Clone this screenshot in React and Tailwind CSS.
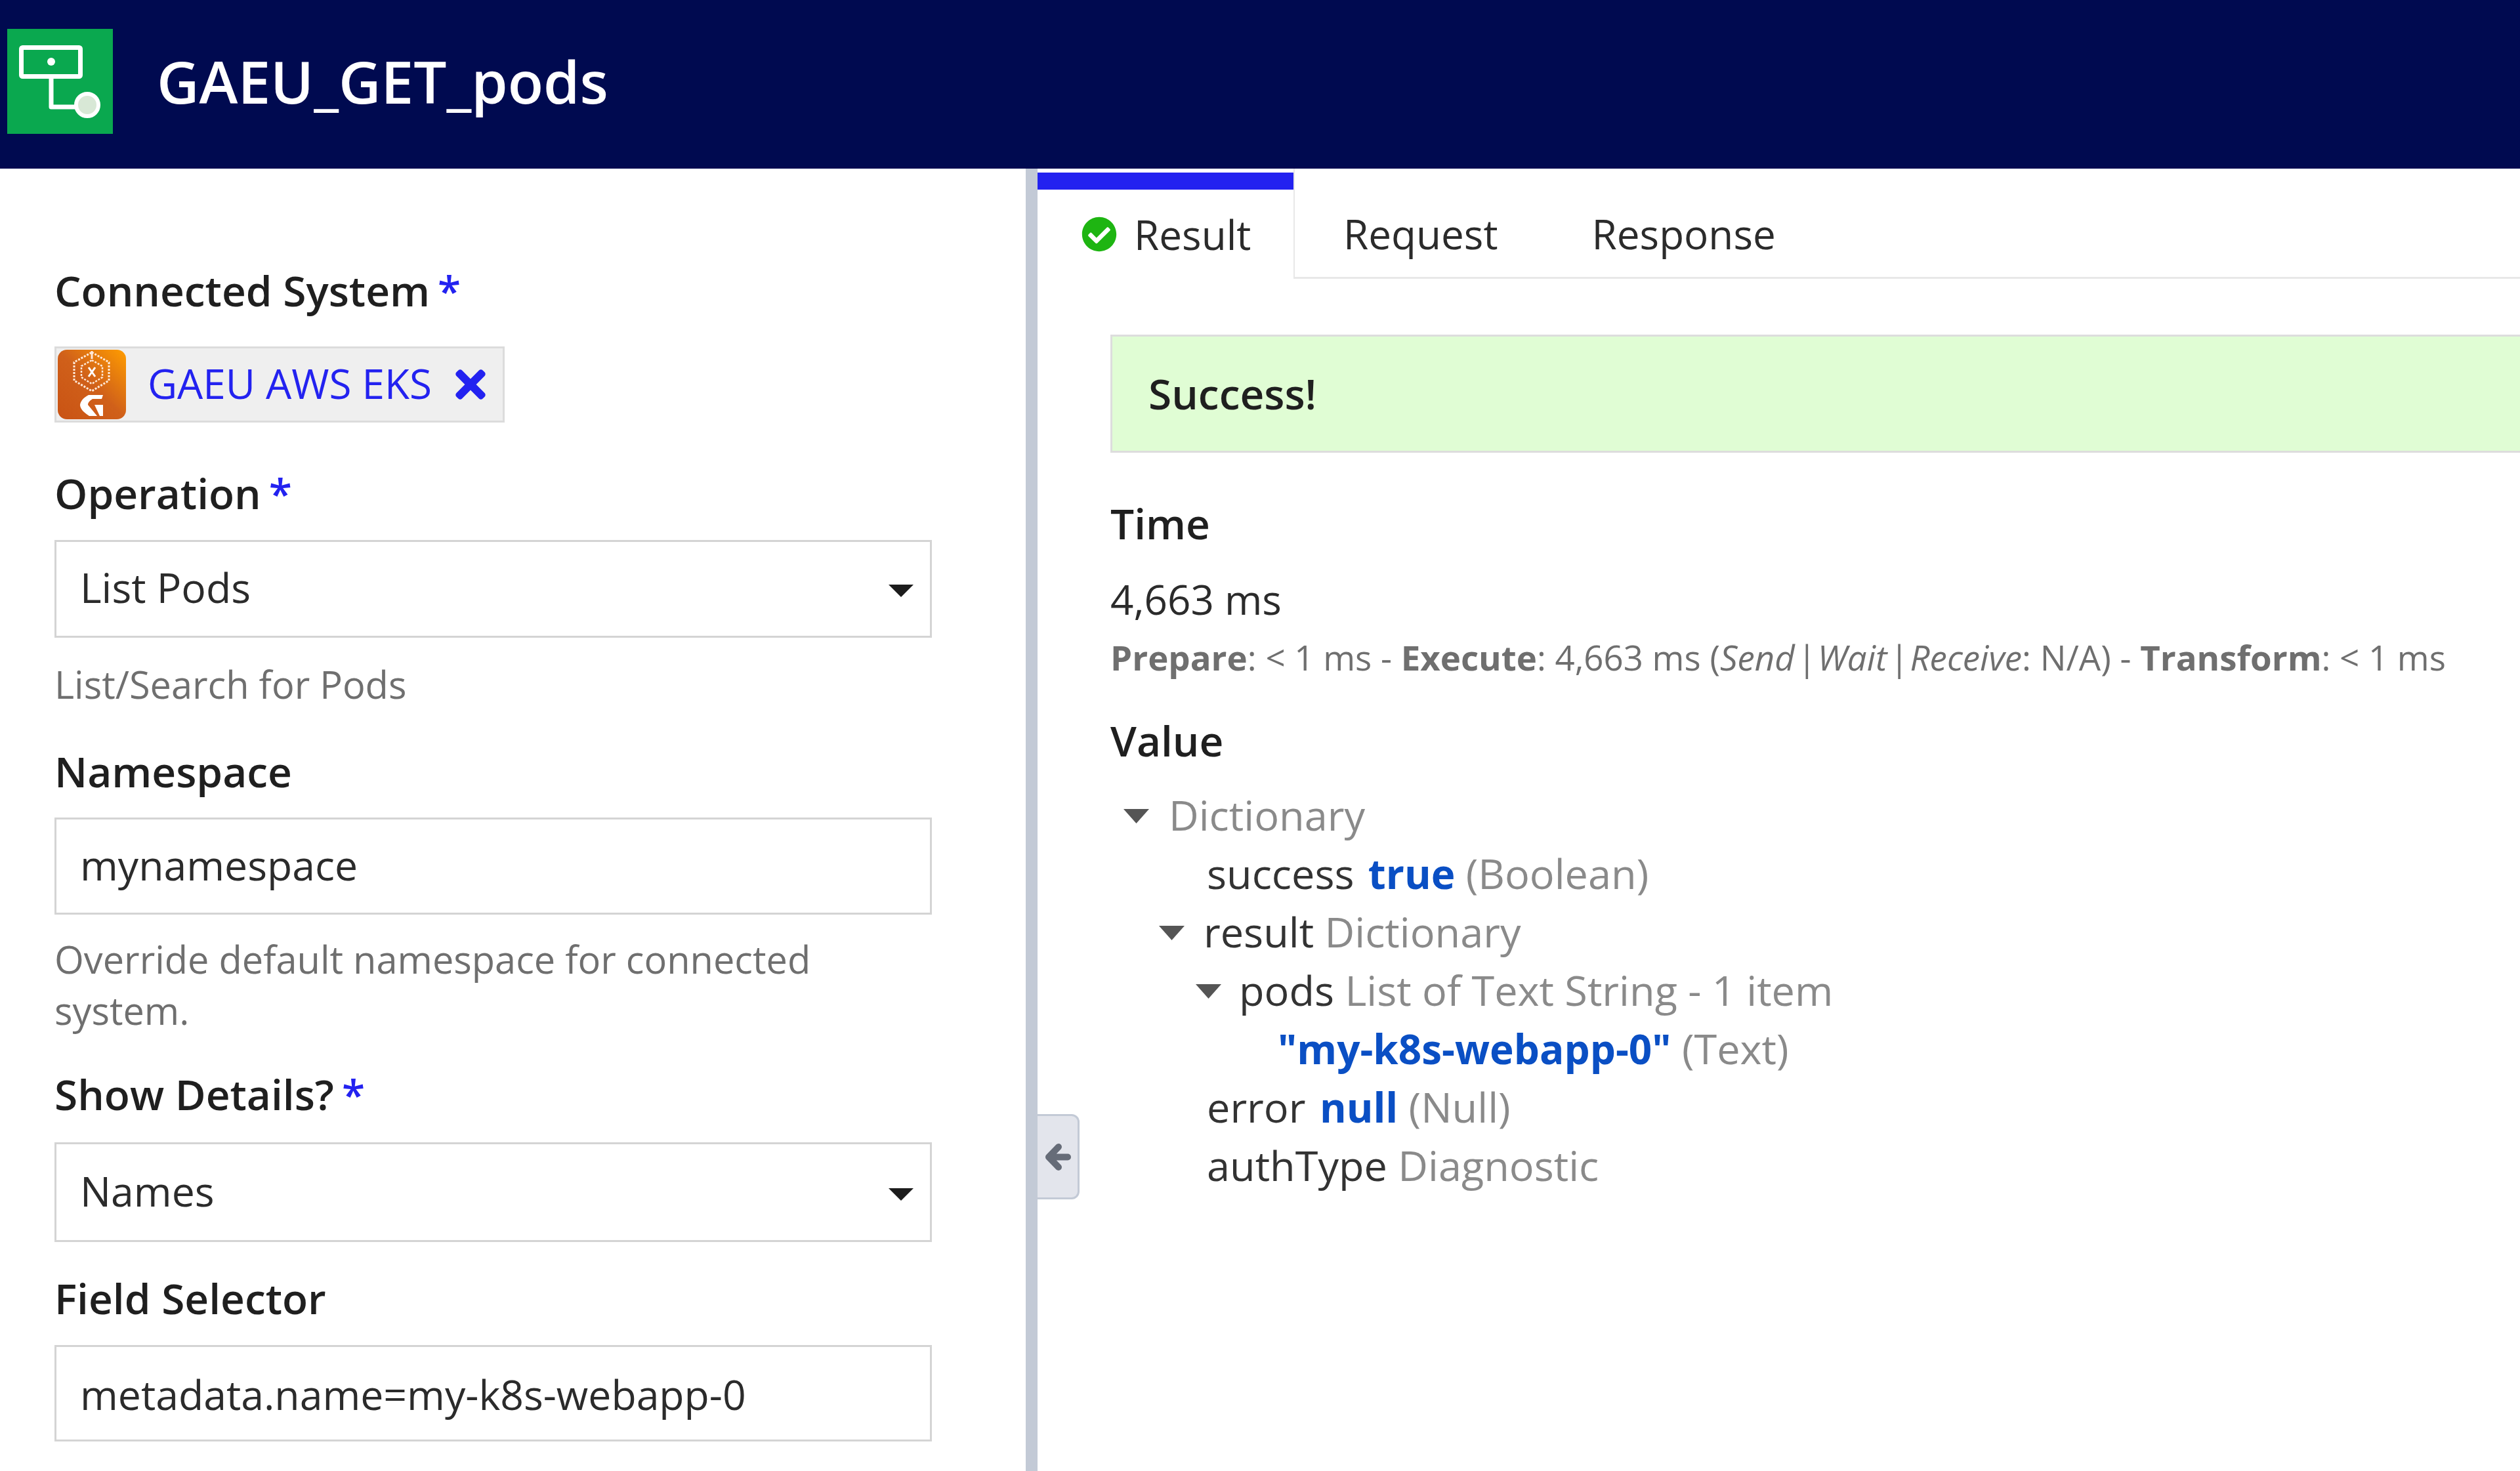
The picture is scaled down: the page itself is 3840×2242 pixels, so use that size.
import React from "react";
import { FaCheckCircle, FaTimes } from "react-icons/fa";

const Label = ({ children, required, className = "" }) => (
  <div className={`h-[88px] text-[64px] leading-[88px] font-semibold text-[#1f1f1f] ${className}`}>
    {children}
    {required && <span className="ml-[12px] font-semibold text-[#2322f0]">*</span>}
  </div>
);

const Help = ({ children, className = "" }) => (
  <div className={`w-[1337px] text-[57.7px] leading-[78px] text-[#6f6f6f] ${className}`}>{children}</div>
);

const Field = ({ children, select, className = "" }) => (
  <div className={`flex w-[1337px] items-center justify-between border-[3px] border-[#d4d4d4] bg-white pl-[36px] pr-[25px] text-[62.5px] text-[#2b2b2b] ${className}`}>
    <span className="pb-[5px]">{children}</span>
    {select && (
      <svg width="38" height="19" viewBox="0 0 38 19" className="mt-[6px]">
        <polygon points="0,0 38,0 19,19" fill="#1c1c1c" />
      </svg>
    )}
  </div>
);

const Caret = () => (
  <svg width="39" height="22" viewBox="0 0 39 22" className="mt-[3px] shrink-0">
    <polygon points="0,0 39,0 19.5,22" fill="#555555" />
  </svg>
);

const Gray = ({ children }) => <span className="text-[#8a8a8a]">{children}</span>;
const Val = ({ children }) => <span className="ml-[5px] text-[62px] font-bold text-[#0a4fc4]">{children}</span>;

const TreeRow = ({ children, className = "" }) => (
  <div className={`flex h-[89px] items-center whitespace-pre text-[63px] text-[#333333] ${className}`}>{children}</div>
);

const AppIcon = () => (
  <svg width="161" height="160" viewBox="0 0 161 160" className="shrink-0">
    <rect width="161" height="160" fill="#0aa84f" />
    <rect x="21.5" y="28.5" width="90" height="44" rx="2" fill="none" stroke="#ffffff" strokeWidth="7" />
    <circle cx="67" cy="50" r="6" fill="#ffffff" />
    <path d="M67 73V119H105" fill="none" stroke="#ffffff" strokeWidth="7" strokeLinejoin="round" />
    <circle cx="122" cy="116" r="17" fill="#d8e8d6" stroke="#ffffff" strokeWidth="6" />
  </svg>
);

const EksIcon = () => (
  <svg width="104" height="106" viewBox="0 0 104 106" className="shrink-0">
    <defs>
      <linearGradient id="eks" x1="1" y1="0" x2="0" y2="1">
        <stop offset="0" stopColor="#ff9d00" />
        <stop offset="0.5" stopColor="#d0601a" />
        <stop offset="1" stopColor="#c95314" />
      </linearGradient>
    </defs>
    <rect width="104" height="106" rx="14" fill="url(#eks)" />
    <polygon points="52,4 78,19 78,47 52,63 25,47 25,19" fill="none" stroke="#ffe9d8" strokeWidth="3" strokeDasharray="3 2" />
    <polygon points="52,16 68,25 68,42 52,52 36,42 36,25" fill="none" stroke="#ffe9d8" strokeWidth="2.5" strokeDasharray="3 2" />
    <path d="M47 27L57 41M57 27L47 41" stroke="#ffffff" strokeWidth="3" />
    <path d="M52 2V14" stroke="#ffe9d8" strokeWidth="3" />
    <path d="M47 69H69L67 75H53C48 78 46 81 46 84L60 101H48C40 96 34 90 34 84C35 77 41 72 47 69Z" fill="#ffffff" />
    <polygon points="56,84 69,84 69,101 64,101" fill="#ffffff" />
  </svg>
);

const BackArrow = () => (
  <svg width="40" height="43" viewBox="0 0 40 43">
    <path d="M21 6L6 21.5L21 37M8 21.5H35" fill="none" stroke="#666c78" strokeWidth="10" strokeLinecap="round" strokeLinejoin="round" />
  </svg>
);

export default function App() {
  return (
    <div className="flex h-[2242px] w-[3840px] flex-col overflow-hidden bg-white font-['Open_Sans',sans-serif]">
      <header className="flex h-[257px] shrink-0 items-center bg-[#000a50] pb-[9px] pl-[11px]">
        <AppIcon />
        <h1 className="ml-[67px] text-[89px] font-semibold text-white">GAEU_GET_pods</h1>
      </header>

      <div className="flex flex-1 overflow-hidden">
        <div className="w-[1563px] shrink-0 pl-[83px] pt-[142px]">
          <Label required>Connected System</Label>
          <div className="mt-[41px] flex h-[116px] w-[686px] items-center border-[3px] border-[#dcdcdc] bg-[#efefef] pl-[2px]">
            <EksIcon />
            <span className="ml-[33px] pb-[3px] text-[62px] text-[#2322f0]">GAEU AWS EKS</span>
            <FaTimes className="ml-[26px] text-[#2322f0]" size={66} />
          </div>

          <Label required className="mt-[64px]">Operation</Label>
          <Field select className="mt-[27px] h-[149px]">List Pods</Field>
          <Help className="mt-[32px]">List/Search for Pods</Help>

          <Label className="mt-[50px]">Namespace</Label>
          <Field className="mt-[26px] h-[148px]">mynamespace</Field>
          <Help className="mt-[29px]">Override default namespace for connected system.</Help>

          <Label required className="mt-[45px]">Show Details?</Label>
          <Field select className="mt-[29px] h-[152px]">Names</Field>

          <Label className="mt-[42px]">Field Selector</Label>
          <Field className="mt-[27px] h-[147px] pt-[8px]">metadata.name=my-k8s-webapp-0</Field>
        </div>

        <div className="w-[18px] shrink-0 bg-[#c3cad6]" />

        <div className="relative flex-1">
          <button className="absolute left-0 top-[1441px] flex h-[130px] w-[64px] items-center justify-center rounded-r-[12px] border-[3px] border-l-0 border-[#c3cad6] bg-[#e3e5ec]">
            <BackArrow />
          </button>

          <div className="flex h-[168px]">
            <div className="w-[392px] shrink-0 border-r-[2px] border-[#e8e8e8] pt-[6px]">
              <div className="h-[26px] bg-[#2322f0]" />
              <div className="flex h-[136px] items-center pl-[67px] text-[62px] text-[#2b2b2b]">
                <FaCheckCircle className="text-[#1eb512]" size={54} />
                <span className="ml-[26px]">Result</span>
              </div>
            </div>
            <div className="flex flex-1 items-center border-b-[3px] border-[#e8e8e8] pl-[74px] pt-[34px] text-[62px] text-[#2b2b2b]">
              <span>Request</span>
              <span className="ml-[143px]">Response</span>
            </div>
          </div>

          <div className="pl-[111px]">
            <div className="mt-[85px] flex h-[180px] items-center border-[3px] border-r-0 border-[#dddddd] bg-[#e0fdd4] pl-[55px] text-[64px] font-semibold text-[#1f1f1f]">
              Success!
            </div>

            <Label className="mt-[64px]">Time</Label>
            <div className="mt-[27px] h-[88px] text-[62px] leading-[88px] text-[#2b2b2b]">4,663 ms</div>
            <div className="mt-[10px] h-[70px] whitespace-pre text-[52.8px] leading-[70px] text-[#6f6f6f]">
              <b className="font-bold">Prepare</b>: &lt; 1 ms - <b className="font-bold">Execute</b>: 4,663 ms (<i>Send<span className="mx-[3px]">|</span>Wait<span className="mx-[3px]">|</span>Receive</i>: N/A) - <b className="font-bold">Transform</b>: &lt; 1 ms
            </div>

            <Label className="mt-[48px]">Value</Label>
            <div className="mt-[25px]">
              <TreeRow className="pl-[20px]">
                <Caret />
                <span className="ml-[30px]"><Gray>Dictionary</Gray></span>
              </TreeRow>
              <TreeRow className="pl-[147px]">
                <span>success <Val>true</Val> <Gray>(Boolean)</Gray></span>
              </TreeRow>
              <TreeRow className="pl-[74px]">
                <Caret />
                <span className="ml-[29px]">result <Gray>Dictionary</Gray></span>
              </TreeRow>
              <TreeRow className="pl-[130px]">
                <Caret />
                <span className="ml-[27px]">pods <Gray>List of Text String - 1 item</Gray></span>
              </TreeRow>
              <TreeRow className="pl-[250px]">
                <span><Val>"my-k8s-webapp-0"</Val> <Gray>(Text)</Gray></span>
              </TreeRow>
              <TreeRow className="pl-[147px]">
                <span>error <Val>null</Val> <Gray>(Null)</Gray></span>
              </TreeRow>
              <TreeRow className="pl-[147px]">
                <span>authType <Gray>Diagnostic</Gray></span>
              </TreeRow>
            </div>
          </div>
        </div>
      </div>
    </div>
  );
}
